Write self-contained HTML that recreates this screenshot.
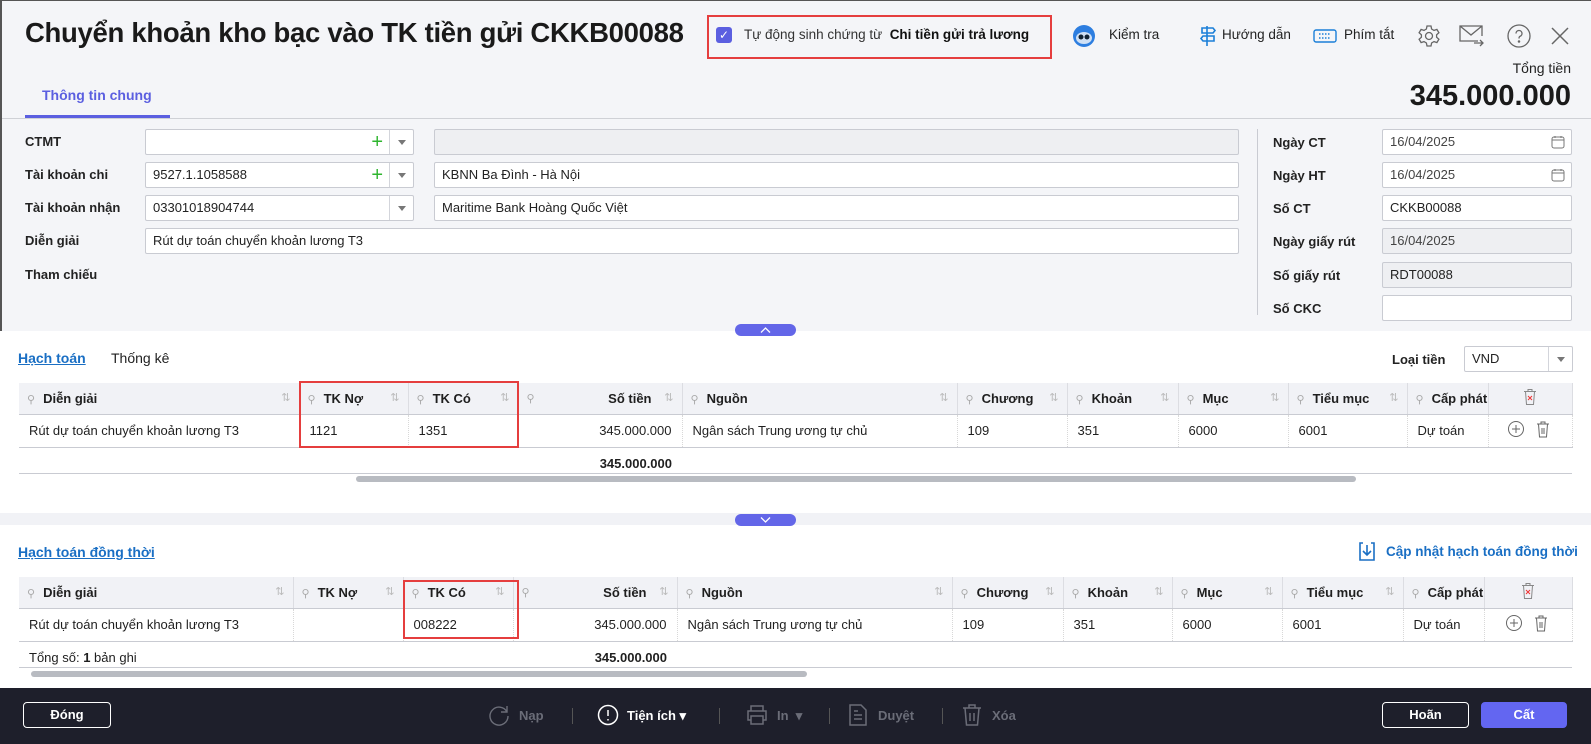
<!DOCTYPE html>
<html><head><meta charset="utf-8">
<style>
*{box-sizing:border-box;margin:0;padding:0}
body{width:1591px;height:744px;overflow:hidden;position:relative;font-family:"Liberation Sans",Arial,sans-serif;font-size:13px;color:#1f1f1f;background:#fff}
.a{position:absolute}
.top{left:0;top:0;width:1591px;height:331px;background:#f4f5f8;border-left:2px solid #555;border-top:1px solid #555}
.title{left:25px;top:17px;font-size:27.5px;font-weight:bold;color:#1a1a1a;letter-spacing:-0.3px}
.inp{position:absolute;height:26px;border:1px solid #c9cbd2;background:#fff;border-radius:2px;padding:0 7px;line-height:24px;font-size:13px;color:#222}
.inp.dis{background:#eeeff2}
.lbl{position:absolute;font-weight:bold;font-size:13px;color:#222}
.dd{position:absolute;right:0;top:0;width:24px;height:24px;border-left:1px solid #d3d5db}
.dd:after{content:"";position:absolute;left:8px;top:10px;border-left:4px solid transparent;border-right:4px solid transparent;border-top:5px solid #777}
.plus{position:absolute;right:30px;top:1px;color:#2fb52f;font-size:20px;line-height:22px}
table{border-collapse:collapse;table-layout:fixed;position:absolute}
td{height:33px;padding:0 10px;font-size:13px;white-space:nowrap;overflow:hidden;border-right:1px dotted #d8d8d8}
th{height:31px;background:#f1f2f6;padding:0 8px;font-weight:bold;text-align:left;font-size:13px;border-right:1px solid #dcdde2;border-bottom:1px solid #c9cbd2;white-space:nowrap;overflow:hidden;position:relative}
th .p{color:#aaa;font-weight:normal;margin-right:8px;font-size:11px}
th .s{position:absolute;right:8px;top:8px;color:#bbb;font-weight:normal;font-size:11px}
tr.r td{border-bottom:1px solid #c9cbd2}
.red{position:absolute;border:2px solid #e53e3e}
.link{color:#1a6fc4;text-decoration:underline;font-weight:bold;font-size:14px}
.foot{left:0;top:688px;width:1591px;height:56px;background:#1e1f2b}
.btn{position:absolute;top:14px;height:26px;border:1px solid #fff;border-radius:4px;color:#fff;font-weight:bold;text-align:center;line-height:24px;font-size:13px}
.fi{position:absolute;top:20px;font-weight:bold;font-size:13px;color:#6b6d78}
.sep{position:absolute;top:20px;width:1px;height:16px;background:#555}
.tb{position:absolute;top:27px;font-size:13.5px;color:#222}
</style></head><body>
<div class="a top"></div>
<div class="a title">Chuyển khoản kho bạc vào TK tiền gửi CKKB00088</div>
<div class="red" style="left:707px;top:15px;width:345px;height:44px"></div>
<div class="a" style="left:716px;top:27px;width:16px;height:16px;background:#5b5fe0;border-radius:3px;color:#fff;font-size:12px;text-align:center;line-height:16px">✓</div>
<div class="a" style="left:744px;top:27px;font-size:13.5px;color:#333">Tự động sinh chứng từ&nbsp; <b style="color:#111">Chi tiền gửi trả lương</b></div>
<svg class="a" style="left:1073px;top:25px" width="22" height="22" viewBox="0 0 22 22"><circle cx="11" cy="11" r="11" fill="#2d7ee0"/><ellipse cx="11" cy="13" rx="8" ry="6" fill="#cfe0f5"/><circle cx="8" cy="12" r="2.5" fill="#123"/><circle cx="14" cy="12" r="2.5" fill="#123"/></svg>
<div class="tb" style="left:1109px">Kiểm tra</div>
<svg class="a" style="left:1198px;top:25px" width="20" height="22" viewBox="0 0 20 22" fill="none" stroke="#1b7fd8" stroke-width="1.6"><path d="M9 1v20M4 3h11l2 2.5-2 2.5H4zM16 11H5l-2 2.5L5 16h11z"/></svg>
<div class="tb" style="left:1222px">Hướng dẫn</div>
<svg class="a" style="left:1313px;top:29px" width="24" height="14" viewBox="0 0 24 14" fill="none" stroke="#1b7fd8" stroke-width="1.4"><rect x="1" y="1" width="22" height="12" rx="2"/><path d="M6 5h12M6 9h12" stroke-dasharray="1.5 1.5"/></svg>
<div class="tb" style="left:1344px">Phím tắt</div>
<svg class="a" style="left:1417px;top:24px" width="24" height="24" viewBox="0 0 24 24" fill="none" stroke="#666" stroke-width="1.3"><circle cx="12" cy="12" r="3.5"/><path d="M10 2h4l.6 3 2.4 1.4 2.9-1 2 3.4-2.3 2v2.4l2.3 2-2 3.4-2.9-1L14.6 19l-.6 3h-4l-.6-3L7 17.6l-2.9 1-2-3.4 2.3-2v-2.4l-2.3-2 2-3.4 2.9 1L9.4 5z"/></svg>
<svg class="a" style="left:1459px;top:25px" width="26" height="22" viewBox="0 0 26 22" fill="none" stroke="#666" stroke-width="1.3"><path d="M19 16H1V1h22v10M1 1l11 9 11-9M15 18h9M21 15l3 3-3 3"/></svg>
<svg class="a" style="left:1507px;top:24px" width="24" height="24" viewBox="0 0 24 24" fill="none" stroke="#666" stroke-width="1.3"><circle cx="12" cy="12" r="11"/><path d="M9 9.5a3 3 0 1 1 4 2.8c-1 .4-1 1.2-1 2.2"/><circle cx="12" cy="17.5" r=".6" fill="#666"/></svg>
<svg class="a" style="left:1550px;top:26px" width="20" height="20" viewBox="0 0 20 20" stroke="#666" stroke-width="1.5"><path d="M2 2l16 16M18 2L2 18"/></svg>
<div class="a" style="right:20px;top:60px;font-size:14px;color:#222">Tổng tiền</div>
<div class="a" style="right:20px;top:80px;font-size:29px;font-weight:bold;color:#1a1a1a">345.000.000</div>
<div class="a" style="left:42px;top:87px;font-size:14px;font-weight:bold;color:#5b5fe0">Thông tin chung</div>
<div class="a" style="left:25px;top:115px;width:145px;height:3px;background:#5b5fe0"></div>
<div class="a" style="left:2px;top:118px;width:1589px;height:1px;background:#cfd1d6"></div>
<div class="lbl" style="left:25px;top:134px">CTMT</div>
<div class="lbl" style="left:25px;top:167px">Tài khoản chi</div>
<div class="lbl" style="left:25px;top:200px">Tài khoản nhận</div>
<div class="lbl" style="left:25px;top:233px">Diễn giải</div>
<div class="lbl" style="left:25px;top:267px">Tham chiếu</div>
<div class="inp" style="left:145px;top:129px;width:269px"><span class="plus">+</span><span class="dd"></span></div>
<div class="inp dis" style="left:434px;top:129px;width:805px"></div>
<div class="inp" style="left:145px;top:162px;width:269px">9527.1.1058588<span class="plus">+</span><span class="dd"></span></div>
<div class="inp" style="left:434px;top:162px;width:805px">KBNN Ba Đình - Hà Nội</div>
<div class="inp" style="left:145px;top:195px;width:269px">03301018904744<span class="dd"></span></div>
<div class="inp" style="left:434px;top:195px;width:805px">Maritime Bank Hoàng Quốc Việt</div>
<div class="inp" style="left:145px;top:228px;width:1094px">Rút dự toán chuyển khoản lương T3</div>
<div class="a" style="left:1257px;top:129px;width:1px;height:186px;background:#c9cbd2"></div>
<div class="lbl" style="left:1273px;top:135px">Ngày CT</div>
<div class="lbl" style="left:1273px;top:168px">Ngày HT</div>
<div class="lbl" style="left:1273px;top:201px">Số CT</div>
<div class="lbl" style="left:1273px;top:234px">Ngày giấy rút</div>
<div class="lbl" style="left:1273px;top:268px">Số giấy rút</div>
<div class="lbl" style="left:1273px;top:301px">Số CKC</div>
<div class="inp" style="left:1382px;top:129px;width:190px;color:#444">16/04/2025<svg style="position:absolute;right:6px;top:5px" width="14" height="14" viewBox="0 0 14 14" fill="none" stroke="#777"><rect x="1" y="2" width="12" height="11" rx="2"/><path d="M4 1v2M10 1v2M1 5h12"/></svg></div>
<div class="inp" style="left:1382px;top:162px;width:190px;color:#444">16/04/2025<svg style="position:absolute;right:6px;top:5px" width="14" height="14" viewBox="0 0 14 14" fill="none" stroke="#777"><rect x="1" y="2" width="12" height="11" rx="2"/><path d="M4 1v2M10 1v2M1 5h12"/></svg></div>
<div class="inp" style="left:1382px;top:195px;width:190px">CKKB00088</div>
<div class="inp dis" style="left:1382px;top:228px;width:190px;color:#444">16/04/2025</div>
<div class="inp dis" style="left:1382px;top:262px;width:190px">RDT00088</div>
<div class="inp" style="left:1382px;top:295px;width:190px"></div>
<div class="a" style="left:735px;top:324px;width:61px;height:12px;background:#6366e8;border-radius:6px"><svg style="position:absolute;left:25px;top:3px" width="11" height="6" viewBox="0 0 11 6" fill="none" stroke="#fff" stroke-width="1.3"><path d="M1 5.5l4.5-4.5 4.5 4.5"/></svg></div>
<div class="a link" style="left:18px;top:350px">Hạch toán</div>
<div class="a" style="left:111px;top:350px;font-size:14px">Thống kê</div>
<div class="lbl" style="left:1392px;top:352px">Loại tiền</div>
<div class="inp" style="left:1464px;top:346px;width:109px">VND<span class="dd"></span></div>
<table style="left:19px;top:383px;width:1553px">
<colgroup><col style="width:280px"><col style="width:109px"><col style="width:110px"><col style="width:164px"><col style="width:275px"><col style="width:110px"><col style="width:111px"><col style="width:110px"><col style="width:119px"><col style="width:81px"><col style="width:84px"></colgroup>
<tr><th><span class="p">⚲</span>Diễn giải<span class="s">⇅</span></th><th><span class="p">⚲</span>TK Nợ<span class="s">⇅</span></th><th><span class="p">⚲</span>TK Có<span class="s">⇅</span></th><th style="text-align:right;padding-right:30px"><span class="p" style="position:absolute;left:8px;top:9px">⚲</span>Số tiền<span class="s">⇅</span></th><th><span class="p">⚲</span>Nguồn<span class="s">⇅</span></th><th><span class="p">⚲</span>Chương<span class="s">⇅</span></th><th><span class="p">⚲</span>Khoản<span class="s">⇅</span></th><th><span class="p">⚲</span>Mục<span class="s">⇅</span></th><th><span class="p">⚲</span>Tiểu mục<span class="s">⇅</span></th><th><span class="p">⚲</span>Cấp phát</th><th style="text-align:center"><svg width="14" height="18" viewBox="0 0 14 18" fill="none" stroke="#888"><path d="M1 3.5h12M5 3.5V1.5h4v2M2.5 3.5l1 13h7l1-13"/><path d="M5 8l4 4M9 8l-4 4" stroke="#e33"/></svg></th></tr>
<tr class="r"><td>Rút dự toán chuyển khoản lương T3</td><td>1121</td><td>1351</td><td style="text-align:right">345.000.000</td><td>Ngân sách Trung ương tự chủ</td><td>109</td><td>351</td><td>6000</td><td>6001</td><td>Dự toán</td><td style="text-align:center"><svg width="44" height="18" viewBox="0 0 44 18" fill="none" stroke="#666"><circle cx="8" cy="9" r="7.5"/><path d="M8 5v8M4 9h8"/><path d="M29 4h12M33 4V2h4v2M30.5 4l1 13h7l1-13M34 8v6M36 8v6"/></svg></td></tr>
<tr><td style="border:0"></td><td style="border:0"></td><td style="border:0"></td><td style="border:0;text-align:right;font-weight:bold">345.000.000</td><td colspan="7" style="border:0"></td></tr>
</table>
<div class="red" style="left:299px;top:381px;width:220px;height:67px"></div>
<div class="a" style="left:19px;top:473px;width:1553px;height:1px;background:#c9cbd2"></div>
<div class="a" style="left:356px;top:476px;width:1000px;height:6px;background:#b8bbc1;border-radius:3px"></div>
<div class="a" style="left:0;top:513px;width:1591px;height:12px;background:#f1f2f6"></div>
<div class="a" style="left:735px;top:514px;width:61px;height:12px;background:#6366e8;border-radius:6px"><svg style="position:absolute;left:25px;top:3px" width="11" height="6" viewBox="0 0 11 6" fill="none" stroke="#fff" stroke-width="1.3"><path d="M1 .5l4.5 4.5 4.5-4.5"/></svg></div>
<div class="a link" style="left:18px;top:544px">Hạch toán đồng thời</div>
<svg class="a" style="left:1358px;top:541px" width="18" height="20" viewBox="0 0 18 20" fill="none" stroke="#1a6fc4" stroke-width="1.6"><path d="M5 2H2v17h14V2h-3M9 4v10M5 10l4 4 4-4"/></svg>
<div class="a" style="left:1386px;top:544px;font-weight:bold;color:#1a6fc4;font-size:13.5px">Cập nhật hạch toán đồng thời</div>
<table style="left:19px;top:577px;width:1553px">
<colgroup><col style="width:274px"><col style="width:110px"><col style="width:110px"><col style="width:164px"><col style="width:275px"><col style="width:111px"><col style="width:109px"><col style="width:110px"><col style="width:121px"><col style="width:81px"><col style="width:88px"></colgroup>
<tr><th><span class="p">⚲</span>Diễn giải<span class="s">⇅</span></th><th><span class="p">⚲</span>TK Nợ<span class="s">⇅</span></th><th><span class="p">⚲</span>TK Có<span class="s">⇅</span></th><th style="text-align:right;padding-right:30px"><span class="p" style="position:absolute;left:8px;top:9px">⚲</span>Số tiền<span class="s">⇅</span></th><th><span class="p">⚲</span>Nguồn<span class="s">⇅</span></th><th><span class="p">⚲</span>Chương<span class="s">⇅</span></th><th><span class="p">⚲</span>Khoản<span class="s">⇅</span></th><th><span class="p">⚲</span>Mục<span class="s">⇅</span></th><th><span class="p">⚲</span>Tiểu mục<span class="s">⇅</span></th><th><span class="p">⚲</span>Cấp phát</th><th style="text-align:center"><svg width="14" height="18" viewBox="0 0 14 18" fill="none" stroke="#888"><path d="M1 3.5h12M5 3.5V1.5h4v2M2.5 3.5l1 13h7l1-13"/><path d="M5 8l4 4M9 8l-4 4" stroke="#e33"/></svg></th></tr>
<tr class="r"><td>Rút dự toán chuyển khoản lương T3</td><td></td><td>008222</td><td style="text-align:right">345.000.000</td><td>Ngân sách Trung ương tự chủ</td><td>109</td><td>351</td><td>6000</td><td>6001</td><td>Dự toán</td><td style="text-align:center"><svg width="44" height="18" viewBox="0 0 44 18" fill="none" stroke="#666"><circle cx="8" cy="9" r="7.5"/><path d="M8 5v8M4 9h8"/><path d="M29 4h12M33 4V2h4v2M30.5 4l1 13h7l1-13M34 8v6M36 8v6"/></svg></td></tr>
<tr><td style="border:0;height:27px">Tổng số: <b>1</b> bản ghi</td><td style="border:0"></td><td style="border:0"></td><td style="border:0;text-align:right;font-weight:bold">345.000.000</td><td colspan="7" style="border:0"></td></tr>
</table>
<div class="red" style="left:403px;top:580px;width:116px;height:59px"></div>
<div class="a" style="left:19px;top:667px;width:1553px;height:1px;background:#c9cbd2"></div>
<div class="a" style="left:31px;top:671px;width:776px;height:6px;background:#b8bbc1;border-radius:3px"></div>
<div class="a foot">
<div class="btn" style="left:23px;width:88px">Đóng</div>
<svg class="a" style="left:488px;top:16px" width="22" height="22" viewBox="0 0 22 22" fill="none" stroke="#6b6d78" stroke-width="1.4"><path d="M19 8A9 9 0 1 0 20 12M19 2v6h-6"/></svg>
<div class="fi" style="left:519px">Nạp</div>
<div class="sep" style="left:572px"></div>
<svg class="a" style="left:597px;top:16px" width="22" height="22" viewBox="0 0 22 22" fill="none" stroke="#fff" stroke-width="1.5"><circle cx="11" cy="11" r="9.5"/><path d="M11 6v6M11 15v1.5"/></svg>
<div class="fi" style="left:627px;color:#fff">Tiện ích ▾</div>
<div class="sep" style="left:719px"></div>
<svg class="a" style="left:746px;top:16px" width="22" height="22" viewBox="0 0 22 22" fill="none" stroke="#6b6d78" stroke-width="1.5"><path d="M5 7V2h12v5M5 16H2V7h18v9h-3M5 12h12v8H5z"/></svg>
<div class="fi" style="left:777px">In &nbsp;▾</div>
<div class="sep" style="left:829px"></div>
<svg class="a" style="left:848px;top:15px" width="20" height="24" viewBox="0 0 20 24" fill="none" stroke="#6b6d78" stroke-width="1.5"><path d="M2 2h11l5 5v15H2zM6 12h8M6 16h8M6 8h4"/></svg>
<div class="fi" style="left:878px">Duyệt</div>
<div class="sep" style="left:942px"></div>
<svg class="a" style="left:962px;top:15px" width="20" height="24" viewBox="0 0 20 24" fill="none" stroke="#6b6d78" stroke-width="1.5"><path d="M1 5h18M7 5V2h6v3M3 5l1.5 17h11L17 5M8 10v8M12 10v8"/></svg>
<div class="fi" style="left:992px">Xóa</div>
<div class="btn" style="left:1382px;width:87px">Hoãn</div>
<div class="btn" style="left:1481px;width:86px;background:#6366f1;border-color:#6366f1">Cất</div>
</div>
</body></html>
